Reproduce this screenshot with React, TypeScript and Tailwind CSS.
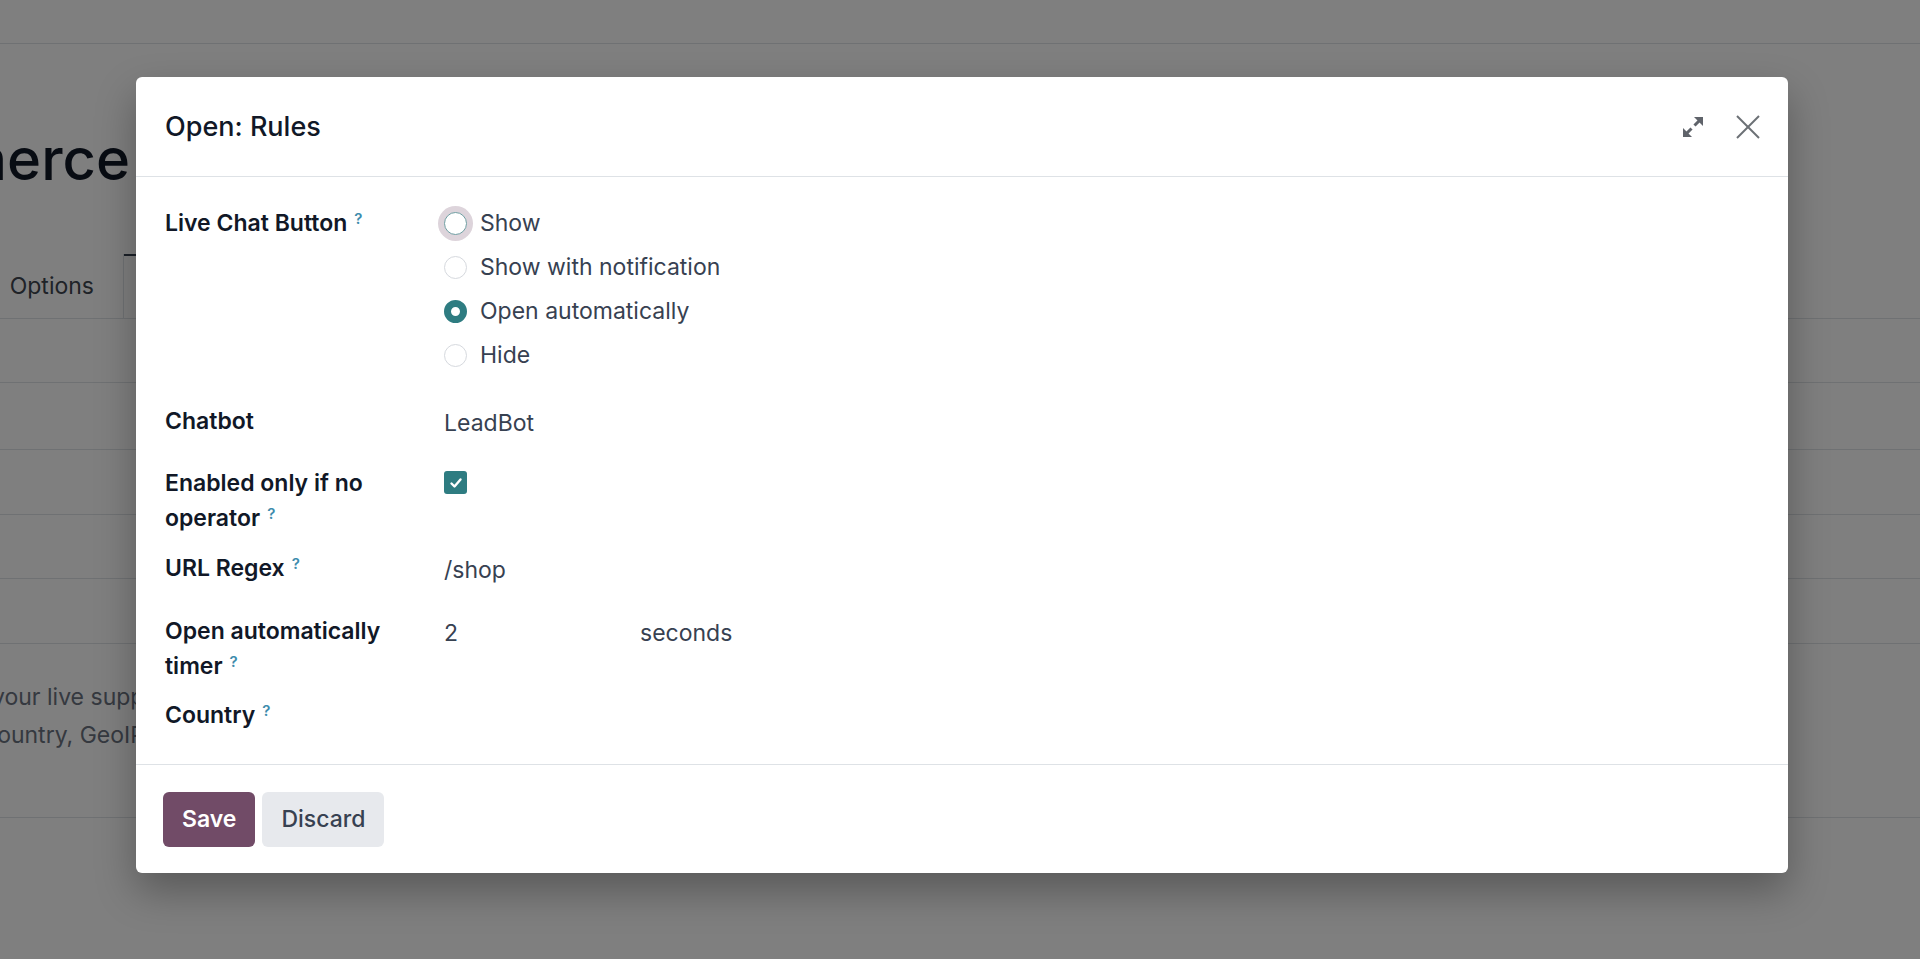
import React from "react";

const labelCls = "w-[279px] shrink-0 pr-[24px] font-semibold text-[#111827]";
const valueCls = "pt-[2px] -mb-[2px] text-[#374151]";

function Help() {
  return <sup className="ml-[7px] text-[15px] font-semibold text-[#3d8cad]">?</sup>;
}

function Radio({ label, checked, focused }: { label: string; checked?: boolean; focused?: boolean }) {
  return (
    <div className="flex h-[44px] items-center">
      {checked ? (
        <span className="h-[23px] w-[23px] rounded-full border-[7px] border-[#2e7c81] bg-white" />
      ) : focused ? (
        <span className="h-[23px] w-[23px] rounded-full border border-[#6f9ea2] bg-white shadow-[0_0_0_6px_#ddd4db]" />
      ) : (
        <span className="h-[23px] w-[23px] rounded-full border border-[#d6d9de] bg-white" />
      )}
      <span className="ml-[13px] text-[#374151]">{label}</span>
    </div>
  );
}

export default function App() {
  return (
    <div className="relative h-[959px] w-[1920px] overflow-hidden bg-white font-['Inter','Noto_Sans',sans-serif] text-[23px]">
      {/* page behind the dialog */}
      <div className="flex flex-col">
        <div className="h-[44px] border-b border-[#dee2e6]" />
        <div className="h-[210px] pt-[80px]">
          <div className="flex w-[130px] justify-end overflow-hidden whitespace-nowrap">
            <span className="text-[58px] leading-[70px] font-medium text-[#111827]">eCommerce</span>
          </div>
        </div>
        <div className="flex h-[65px] border-b border-[#dee2e6]">
          <div className="flex w-[124px] items-center justify-end border-r border-[#dee2e6] pr-[29px] text-[#3f4650]">
            Options
          </div>
          <div className="w-[300px] border-t-2 border-[#374151]" />
        </div>
        <div className="h-[64px] border-b border-[#dee2e6]" />
        <div className="h-[67px] border-b border-[#dee2e6]" />
        <div className="h-[65px] border-b border-[#dee2e6]" />
        <div className="h-[64px] border-b border-[#dee2e6]" />
        <div className="h-[65px] border-b border-[#dee2e6]" />
        <div className="h-[174px] overflow-hidden border-b border-[#dee2e6] pt-[34px] leading-[38px] whitespace-nowrap text-[#6b7280]">
          <p className="-ml-[8px]">your live support channel. You can apply an action for the given URL, and per country.</p>
          <p className="-ml-[16px]">country, GeoIP must be installed on your server, otherwise, the countries of the rule will not be taken into account.</p>
        </div>
      </div>

      {/* backdrop + dialog */}
      <div className="absolute inset-0 bg-black/50 pl-[136px] pt-[77px]">
        <div className="flex w-[1652px] flex-col rounded-[6px] bg-white leading-[35px] shadow-[0_18px_40px_rgba(0,0,0,0.3)]">
          {/* header */}
          <div className="flex h-[100px] items-center border-b border-[#dee2e6] pl-[29px] pr-[28px]">
            <h4 className="flex-1 text-[27px] font-medium text-[#111827]">Open: Rules</h4>
            <svg width="22" height="22" viewBox="0 0 22 22" className="text-[#5f636a]">
              <polygon points="12,1 21,1 21,10" fill="currentColor" />
              <line x1="17" y1="5" x2="12.5" y2="9.5" stroke="currentColor" strokeWidth="3" />
              <polygon points="1,12 1,21 10,21" fill="currentColor" />
              <line x1="5" y1="17" x2="9.5" y2="12.5" stroke="currentColor" strokeWidth="3" />
            </svg>
            <svg width="24" height="24" viewBox="0 0 24 24" className="ml-[32px] text-[#6b7075]">
              <line x1="1" y1="1" x2="23" y2="23" stroke="currentColor" strokeWidth="2" />
              <line x1="23" y1="1" x2="1" y2="23" stroke="currentColor" strokeWidth="2" />
            </svg>
          </div>

          {/* body */}
          <div className="flex flex-col pl-[29px] pt-[24px] pb-[31px]">
            <div className="flex">
              <div className={labelCls + " pt-[5px]"}>
                Live Chat Button
                <Help />
              </div>
              <div className="flex flex-col">
                <Radio label="Show" focused />
                <Radio label="Show with notification" />
                <Radio label="Open automatically" checked />
                <Radio label="Hide" />
              </div>
            </div>

            <div className="mt-[27px] flex">
              <div className={labelCls}>Chatbot</div>
              <div className={valueCls}>LeadBot</div>
            </div>

            <div className="mt-[27px] flex">
              <div className={labelCls}>
                Enabled only if no operator
                <Help />
              </div>
              <div className="pt-[5px]">
                <span className="flex h-[23px] w-[23px] items-center justify-center rounded-[3px] bg-[#2e7c81]">
                  <svg width="14" height="14" viewBox="0 0 14 14">
                    <polyline points="2.5,7.5 5.5,10.5 11.5,3.5" fill="none" stroke="white" strokeWidth="2.4" strokeLinecap="round" strokeLinejoin="round" />
                  </svg>
                </span>
              </div>
            </div>

            <div className="mt-[15px] flex">
              <div className={labelCls}>
                URL Regex
                <Help />
              </div>
              <div className={valueCls}>/shop</div>
            </div>

            <div className="mt-[28px] flex">
              <div className={labelCls}>
                Open automatically timer
                <Help />
              </div>
              <div className={valueCls + " flex"}>
                <span className="w-[196px]">2</span>
                <span>seconds</span>
              </div>
            </div>

            <div className="mt-[14px] flex">
              <div className={labelCls}>
                Country
                <Help />
              </div>
            </div>
          </div>

          {/* footer */}
          <div className="flex gap-[7px] border-t border-[#dee2e6] pl-[27px] pt-[27px] pb-[26px]">
            <button className="h-[55px] rounded-[6px] bg-[#714b67] px-[19px] font-semibold text-white">Save</button>
            <button className="h-[55px] rounded-[6px] bg-[#e7e9ed] px-[19px] font-medium text-[#374151]">Discard</button>
          </div>
        </div>
      </div>
    </div>
  );
}
